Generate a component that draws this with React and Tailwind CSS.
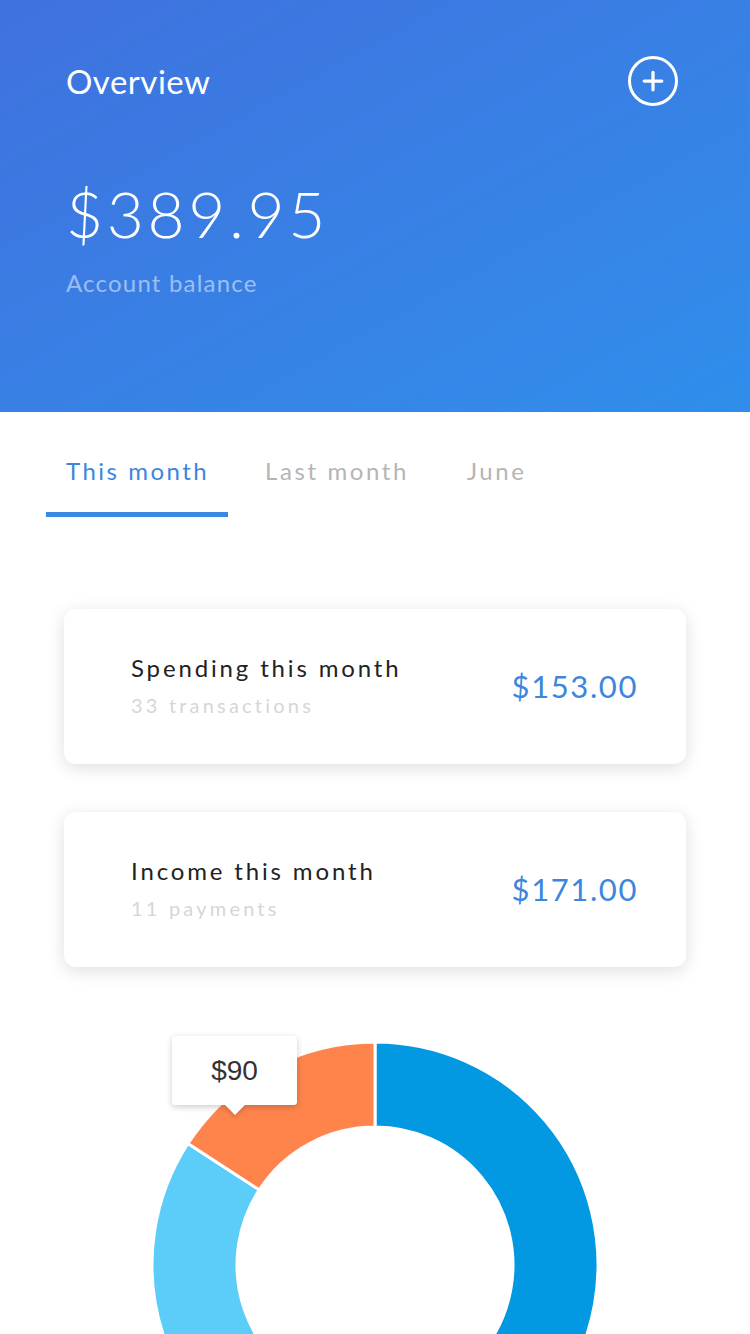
import { Plus } from "lucide-react"

const font = { fontFamily: "Lato, 'Noto Sans', sans-serif" }

function pt(cx, cy, r, deg) {
  const a = (deg * Math.PI) / 180
  return [cx + r * Math.sin(a), cy - r * Math.cos(a)]
}

function arc(cx, cy, r1, r2, a0, a1) {
  const large = a1 - a0 > 180 ? 1 : 0
  const [x0, y0] = pt(cx, cy, r2, a0)
  const [x1, y1] = pt(cx, cy, r2, a1)
  const [x2, y2] = pt(cx, cy, r1, a1)
  const [x3, y3] = pt(cx, cy, r1, a0)
  return `M${x0} ${y0} A${r2} ${r2} 0 ${large} 1 ${x1} ${y1} L${x2} ${y2} A${r1} ${r1} 0 ${large} 0 ${x3} ${y3} Z`
}

const segments = [
  { from: 0, to: 200, color: "#0398E2" },
  { from: 200, to: 303, color: "#5BCDF8" },
  { from: 303, to: 360, color: "#FE844C" },
]

function Donut() {
  return (
    <svg width="446" height="446" viewBox="0 0 446 446">
      {segments.map((s) => (
        <path
          key={s.color}
          d={arc(223, 223, 138, 223, s.from, s.to)}
          fill={s.color}
          stroke="#ffffff"
          strokeWidth="3"
        />
      ))}
    </svg>
  )
}

function StatCard({ title, sub, amount }) {
  return (
    <div className="flex h-[155px] items-center justify-between rounded-xl bg-white pl-[67px] pr-[48px] shadow-[0_4px_18px_rgba(0,0,0,0.13)]">
      <div className="-mt-[4px] flex flex-col">
        <span className="text-[24px] leading-[30px] tracking-[2.85px] text-[#222]">{title}</span>
        <span className="mt-[10px] text-[20px] leading-[24px] tracking-[3.2px] text-[#d6d6d6]">{sub}</span>
      </div>
      <span className="text-[31px] tracking-[1.6px] text-[#3d86dd]">{amount}</span>
    </div>
  )
}

export default function App() {
  return (
    <div className="relative h-[1334px] w-[750px] overflow-hidden bg-white" style={font}>
      <header className="h-[412px] bg-gradient-to-br from-[#3f71de] to-[#2f8eeb] px-[66px] pt-[56px] text-white">
        <div className="flex items-center justify-between">
          <h1 className="text-[33px] font-normal leading-[44px] tracking-[0.5px]">Overview</h1>
          <div className="mr-[6px] flex h-[50px] w-[50px] items-center justify-center rounded-full border-[3px] border-white">
            <Plus className="h-[30px] w-[30px]" strokeWidth={2.6} />
          </div>
        </div>
        <div className="mt-[76px] text-[64px] font-light leading-[64px] tracking-[3.6px]">$389.95</div>
        <div className="mt-[22px] text-[24px] leading-[30px] tracking-[1.2px] text-white/50">Account balance</div>
      </header>

      <nav className="flex pl-[46px] pt-[44px]">
        <div className="flex w-[182px] flex-col items-start">
          <span className="pl-[20px] text-[24px] leading-[30px] tracking-[2.5px] text-[#3d86dd]">This month</span>
          <span className="mt-[26px] h-[5px] w-full bg-[#3a88e0]" />
        </div>
        <span className="ml-[37px] text-[24px] leading-[30px] tracking-[2.6px] text-[#b5b5b5]">Last month</span>
        <span className="ml-[58px] text-[24px] leading-[30px] tracking-[2.6px] text-[#b5b5b5]">June</span>
      </nav>

      <section className="flex flex-col gap-[48px] px-[64px] pt-[92px]">
        <StatCard title="Spending this month" sub="33 transactions" amount="$153.00" />
        <StatCard title="Income this month" sub="11 payments" amount="$171.00" />
      </section>

      <div className="relative ml-[152px] mt-[75px] w-[446px]">
        <Donut />
        <div
          className="absolute left-[20px] top-[-6px] flex h-[69px] w-[125px] items-center justify-center rounded-[3px] bg-white shadow-[0_2px_6px_rgba(0,0,0,0.2)]"
          style={{ fontFamily: "'Liberation Sans', Arial, sans-serif" }}
        >
          <span className="text-[28px] text-[#333]">$90</span>
          <span className="absolute bottom-[-7px] left-[56px] h-[14px] w-[14px] rotate-45 bg-white shadow-[3px_3px_4px_rgba(0,0,0,0.1)]" />
        </div>
      </div>
    </div>
  )
}
